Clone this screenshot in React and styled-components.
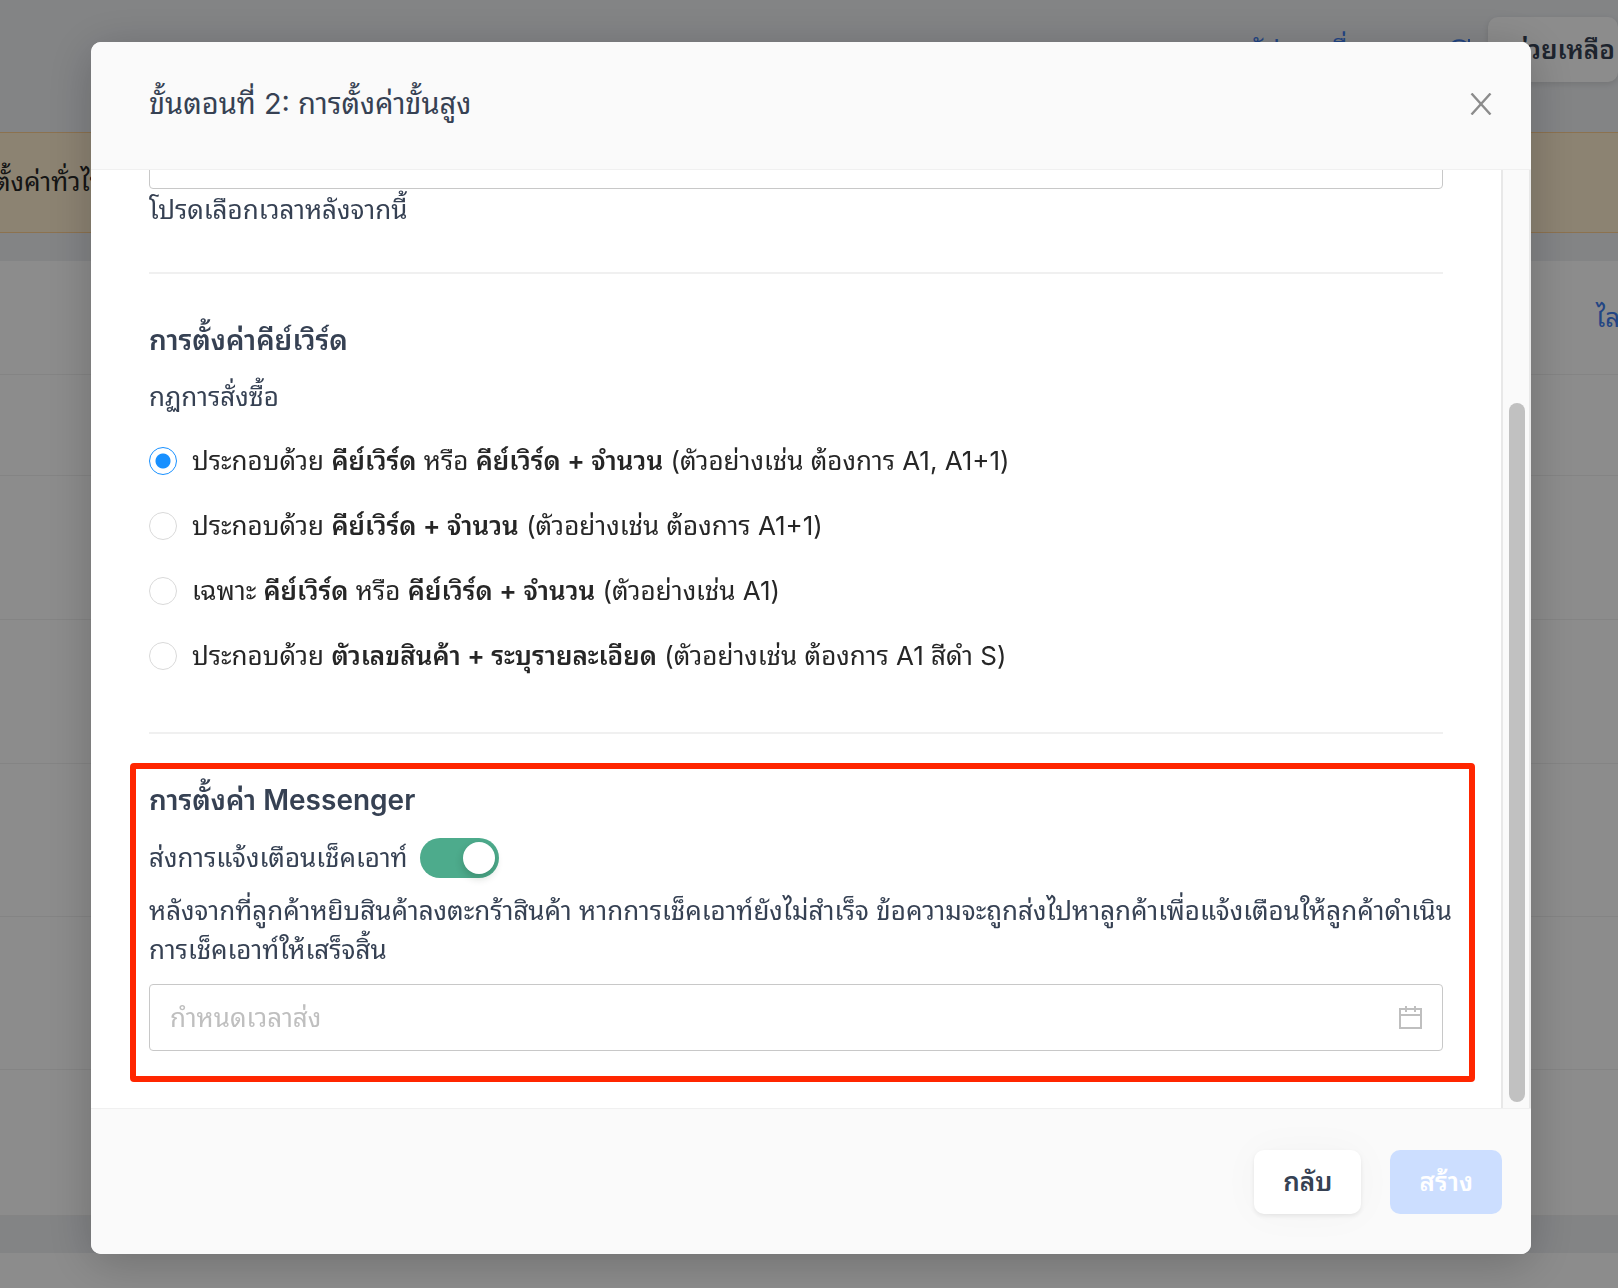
import React, { useState } from 'react';
import styled, { createGlobalStyle } from 'styled-components';

const colors = {
  ink: '#364153',
  text: '#262626',
  blue: '#1890ff',
  link: '#3f7ef0',
  line: '#f0f0f0',
  field: '#c8c8c8',
  muted: '#bfbfbf',
  panel: '#fafafa',
  green: '#4dab8c',
  mark: '#ff2600',
};

const GlobalStyle = createGlobalStyle`
  * {
    box-sizing: border-box;
  }
  body {
    margin: 0;
    overflow: hidden;
    color: ${colors.ink};
    font-family: Inter, "Noto Sans Thai Looped", "Noto Looped Thai", Loma, "Noto Sans Thai", "Noto Sans", sans-serif;
    font-size: 26px;
    line-height: 38px;
  }
  button, input {
    font: inherit;
    color: inherit;
  }
`;

const Page = styled.div`
  height: 100vh;
  overflow: hidden;
  background: #eef0f3;
`;
const TopBar = styled.header`
  display: flex;
  justify-content: flex-end;
  align-items: center;
  gap: 17px;
  height: 132px;
  padding: 17px 0 50px;
`;
const RefreshLink = styled.a`
  display: flex;
  align-items: center;
  gap: 18px;
  color: ${colors.link};
  text-decoration: none;
  time {
    margin: 4px 0 0 -8px;
    color: #7a828e;
    font-size: 22px;
  }
`;
const HelpButton = styled.button`
  flex: none;
  width: 130px;
  height: 65px;
  padding: 0 0 0 22px;
  border: 0;
  border-radius: 10px;
  background: #fff;
  font-weight: 600;
  white-space: nowrap;
  box-shadow: 0 2px 6px rgba(0, 0, 0, 0.12);
`;
const Notice = styled.div`
  height: 101px;
  margin-left: -6px;
  padding: 30px 0;
  border: solid #ffcf91;
  border-width: 1px 0;
  background: #ffeed0;
  color: ${colors.text};
  white-space: nowrap;
`;
const Sheet = styled.section`
  margin: 28px 0 37px;
  background: #fff;
`;
const SheetRow = styled.div`
  display: flex;
  justify-content: flex-end;
  align-items: center;
  height: ${props => props.$height}px;
  border-bottom: 1px solid ${colors.line};
  white-space: nowrap;
  a {
    width: 22px;
    color: ${colors.link};
    text-decoration: none;
  }
`;

const Mask = styled.div`
  position: fixed;
  inset: 0;
  display: flex;
  padding: 42px 87px 34px 91px;
  background: rgba(0, 0, 0, 0.45);
`;
const Dialog = styled.div`
  display: flex;
  flex-direction: column;
  flex: 1;
  min-width: 0;
  overflow: hidden;
  border-radius: 10px;
  background: #fff;
  box-shadow: 0 8px 48px rgba(0, 0, 0, 0.22);
`;
const DialogHeader = styled.header`
  display: flex;
  justify-content: space-between;
  align-items: center;
  flex: none;
  height: 128px;
  padding: 0 39px 4px 58px;
  border-bottom: 1px solid ${colors.line};
  background: ${colors.panel};
  h2 {
    margin: 0;
    font-size: 29px;
    font-weight: 400;
  }
`;
const CloseButton = styled.button`
  display: flex;
  padding: 0;
  border: 0;
  background: none;
  cursor: pointer;
`;
const DialogBody = styled.div`
  display: flex;
  flex: 1;
  min-height: 0;
`;
const Content = styled.div`
  display: flex;
  flex-direction: column;
  justify-content: flex-end;
  flex: 1;
  min-width: 0;
  overflow: hidden;
  padding: 0 58px 26px;
`;
const ScrollTrack = styled.div`
  display: flex;
  flex-direction: column;
  justify-content: flex-end;
  align-items: center;
  width: 30px;
  padding: 0 0 6px 2px;
  border: solid #e8e8e8;
  border-width: 0 2px;
  background: ${colors.panel};
`;
const ScrollThumb = styled.div`
  width: 16px;
  height: 75%;
  border-radius: 8px;
  background: #c1c1c1;
`;
const DialogFooter = styled.footer`
  display: flex;
  justify-content: flex-end;
  align-items: center;
  gap: 29px;
  flex: none;
  height: 146px;
  padding: 0 29px;
  border-top: 1px solid ${colors.line};
  background: ${colors.panel};
`;
const Button = styled.button`
  height: 64px;
  padding: 0 29px;
  border: 0;
  border-radius: 10px;
  background: ${props => (props.$primary ? '#ccdeff' : '#fff')};
  color: ${props => (props.$primary ? '#fff' : colors.ink)};
  font-weight: 600;
  box-shadow: ${props => (props.$primary ? 'none' : '0 2px 4px rgba(0, 0, 0, 0.08), 0 0 40px rgba(0, 0, 0, 0.03)')};
`;

const Section = styled.section`
  padding: 46px 0 ${props => (props.$compact ? 43 : 57)}px;
  border-bottom: 2px solid ${colors.line};
`;
const SectionTitle = styled.h3`
  margin: 0;
  font-size: 28px;
  font-weight: 600;
  line-height: 40px;
`;
const Hint = styled.div`
  margin-top: 2px;
`;
const Label = styled.div`
  margin-top: 18px;
`;
const Field = styled.label`
  display: flex;
  align-items: center;
  height: 67px;
  padding: 0 20px;
  border: 1px solid ${colors.field};
  border-radius: 4px;
  background: #fff;
  input {
    flex: 1;
    min-width: 0;
    height: 60px;
    padding: 0;
    border: 0;
    outline: 0;
    background: none;
  }
  input::placeholder {
    color: ${colors.muted};
    opacity: 1;
  }
`;
const RuleList = styled.div`
  display: grid;
  gap: 27px;
  margin-top: 26px;
`;
const Rule = styled.label`
  display: flex;
  align-items: center;
  gap: 15px;
  color: ${colors.text};
  b {
    font-weight: 600;
  }
`;
const Radio = styled.input`
  appearance: none;
  flex: none;
  width: 28px;
  height: 28px;
  margin: 0;
  border: 1px solid #d9d9d9;
  border-radius: 50%;
  &:checked {
    border-color: ${colors.blue};
    background: radial-gradient(circle, ${colors.blue} 7px, #fff 8px);
  }
`;
const Highlight = styled.section`
  margin: 29px -32px 0 -19px;
  padding: 11px 26px 25px 13px;
  border: 6px solid ${colors.mark};
  border-radius: 4px;
  p {
    margin: 13px -24px 15px 0;
    line-height: 39px;
  }
`;
const SwitchRow = styled.label`
  display: flex;
  align-items: center;
  gap: 12px;
  margin-top: 18px;
`;
const Switch = styled.input`
  appearance: none;
  display: flex;
  width: 79px;
  height: 40px;
  margin: 0;
  padding: 4px;
  border-radius: 20px;
  background: ${colors.muted};
  &::before {
    content: '';
    width: 32px;
    height: 32px;
    border-radius: 50%;
    background: #fff;
    box-shadow: 0 4px 8px rgba(0, 35, 11, 0.2);
  }
  &:checked {
    justify-content: flex-end;
    background: ${colors.green};
  }
`;

const rows = [101, 144, 144, 153, 153, 146];

const rules = [
  <>ประกอบด้วย <b>คีย์เวิร์ด</b> หรือ <b>คีย์เวิร์ด + จำนวน</b> (ตัวอย่างเช่น ต้องการ A1, A1+1)</>,
  <>ประกอบด้วย <b>คีย์เวิร์ด + จำนวน</b> (ตัวอย่างเช่น ต้องการ A1+1)</>,
  <>เฉพาะ <b>คีย์เวิร์ด</b> หรือ <b>คีย์เวิร์ด + จำนวน</b> (ตัวอย่างเช่น A1)</>,
  <>ประกอบด้วย <b>ตัวเลขสินค้า + ระบุรายละเอียด</b> (ตัวอย่างเช่น ต้องการ A1 สีดำ S)</>,
];

const CloseIcon = () => (
  <svg width="22" height="22" viewBox="0 0 22 22" fill="none" stroke="#8c8c8c" strokeWidth="2.4">
    <path d="M1.5 0.5 20.5 21.5M20.5 0.5 1.5 21.5" />
  </svg>
);

const CalendarIcon = () => (
  <svg width="23" height="23" viewBox="0 0 23 23" fill="none" stroke={colors.muted} strokeWidth="2">
    <path d="M1 3h21v19H1zM1 9h21M7 0v6M16 0v6" />
  </svg>
);

const ReloadIcon = () => (
  <svg width="24" height="24" viewBox="0 0 24 24" fill="none" stroke="currentColor" strokeWidth="2">
    <path d="M20 6A10 10 0 1 0 22 14M22 1v6h-6" />
  </svg>
);

function Background() {
  return (
    <Page>
      <TopBar>
        <RefreshLink href="#refresh">
          อัปเดตเมื่อ
          <time>14:32</time>
          <ReloadIcon />
        </RefreshLink>
        <HelpButton type="button">ช่วยเหลือ</HelpButton>
      </TopBar>
      <Notice>ตั้งค่าทั่วไป</Notice>
      <Sheet>
        <SheetRow $height={114}>
          <a href="#live">ไลฟ์</a>
        </SheetRow>
        {rows.map((height, i) => (
          <SheetRow key={i} $height={height} />
        ))}
      </Sheet>
      <Sheet>
        <SheetRow $height={146} />
      </Sheet>
    </Page>
  );
}

function App() {
  const [rule, setRule] = useState(0);
  const [remind, setRemind] = useState(true);

  return (
    <>
      <GlobalStyle />
      <Background />
      <Mask>
        <Dialog role="dialog" aria-labelledby="dialog-title">
          <DialogHeader>
            <h2 id="dialog-title">ขั้นตอนที่ 2: การตั้งค่าขั้นสูง</h2>
            <CloseButton type="button" aria-label="ปิด">
              <CloseIcon />
            </CloseButton>
          </DialogHeader>

          <DialogBody>
            <Content>
              <Section $compact>
                <Field>
                  <input type="text" aria-label="เวลา" />
                </Field>
                <Hint>โปรดเลือกเวลาหลังจากนี้</Hint>
              </Section>

              <Section>
                <SectionTitle>การตั้งค่าคีย์เวิร์ด</SectionTitle>
                <Label>กฏการสั่งซื้อ</Label>
                <RuleList>
                  {rules.map((text, i) => (
                    <Rule key={i}>
                      <Radio type="radio" name="rule" checked={rule === i} onChange={() => setRule(i)} />
                      <span>{text}</span>
                    </Rule>
                  ))}
                </RuleList>
              </Section>

              <Highlight>
                <SectionTitle>การตั้งค่า Messenger</SectionTitle>
                <SwitchRow>
                  ส่งการแจ้งเตือนเช็คเอาท์
                  <Switch type="checkbox" role="switch" checked={remind} onChange={() => setRemind(!remind)} />
                </SwitchRow>
                <p>
                  หลังจากที่ลูกค้าหยิบสินค้าลงตะกร้าสินค้า หากการเช็คเอาท์ยังไม่สำเร็จ
                  ข้อความจะถูกส่งไปหาลูกค้าเพื่อแจ้งเตือนให้ลูกค้าดำเนินการเช็คเอาท์ให้เสร็จสิ้น
                </p>
                <Field>
                  <input type="text" placeholder="กำหนดเวลาส่ง" aria-label="กำหนดเวลาส่ง" />
                  <CalendarIcon />
                </Field>
              </Highlight>
            </Content>
            <ScrollTrack>
              <ScrollThumb />
            </ScrollTrack>
          </DialogBody>

          <DialogFooter>
            <Button type="button">กลับ</Button>
            <Button type="button" $primary disabled>
              สร้าง
            </Button>
          </DialogFooter>
        </Dialog>
      </Mask>
    </>
  );
}

export default App;
